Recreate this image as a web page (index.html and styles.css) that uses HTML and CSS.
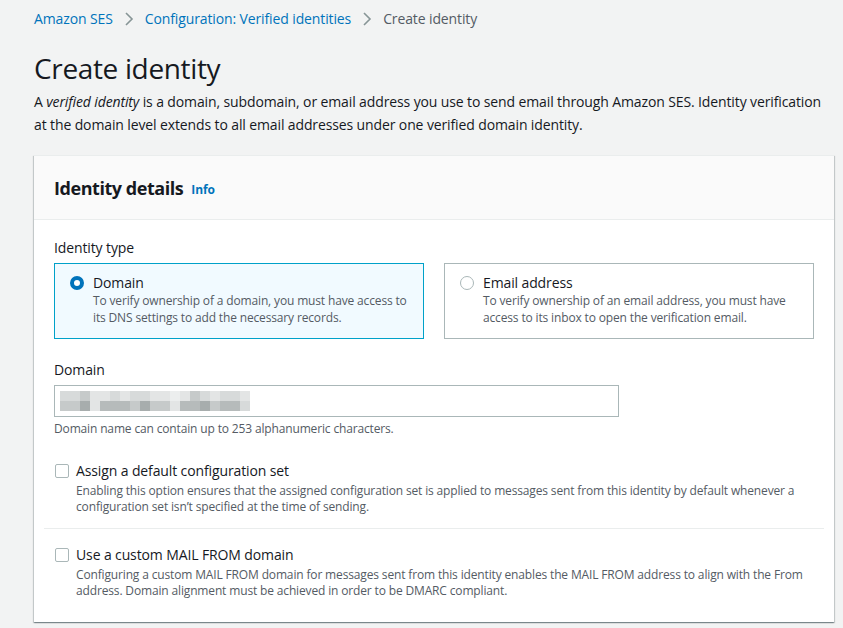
FILE: index.html
```html
<!DOCTYPE html>
<html>
<head>
<meta charset="utf-8">
<link rel="stylesheet" href="styles.css">
</head>
<body>
<div class="page">
  <nav class="crumbs">
    <a class="crumb-link">Amazon SES</a>
    <svg class="chev" width="16" height="16" viewBox="0 0 16 16"><path d="M5 2l6 6-6 6" fill="none" stroke="#879596" stroke-width="1.6"/></svg>
    <a class="crumb-link">Configuration: Verified identities</a>
    <svg class="chev" width="16" height="16" viewBox="0 0 16 16"><path d="M5 2l6 6-6 6" fill="none" stroke="#879596" stroke-width="1.6"/></svg>
    <span class="crumb-current">Create identity</span>
  </nav>
  <h1 class="title">Create identity</h1>
  <p class="lead">A <em>verified identity</em> is a domain, subdomain, or email address you use to send email through Amazon SES. Identity verification at the domain level extends to all email addresses under one verified domain identity.</p>

  <section class="card">
    <header class="card-head">
      <h2 class="card-title">Identity details</h2>
      <a class="info">Info</a>
    </header>
    <div class="card-body">
      <div class="field-label">Identity type</div>
      <div class="tiles">
        <div class="tile tile-selected">
          <span class="radio radio-on"></span>
          <div class="tile-text">
            <div class="tile-label">Domain</div>
            <div class="tile-desc">To verify ownership of a domain, you must have access to its DNS settings to add the necessary records.</div>
          </div>
        </div>
        <div class="tile">
          <span class="radio"></span>
          <div class="tile-text">
            <div class="tile-label">Email address</div>
            <div class="tile-desc">To verify ownership of an email address, you must have access to its inbox to open the verification email.</div>
          </div>
        </div>
      </div>

      <div class="field-label domain-label">Domain</div>
      <div class="input">
        <div class="blur">
          <div class="brow">
            <i class="s2"></i><i class="s2"></i><i class="s3"></i><i class="s1"></i><i class="s1"></i><i class="s2"></i><i class="s1"></i><i class="s2"></i><i class="s2"></i><i class="s1"></i><i class="s1"></i><i class="s0"></i><i class="s1"></i><i class="s3"></i><i class="s2"></i><i class="s1"></i><i class="s2"></i><i class="s2"></i><i class="s1"></i>
          </div>
          <div class="brow">
            <i class="s3"></i><i class="s3"></i><i class="s5"></i><i class="s1"></i><i class="s4"></i><i class="s4"></i><i class="s4"></i><i class="s3"></i><i class="s5"></i><i class="s3"></i><i class="s3"></i><i class="s1"></i><i class="s4"></i><i class="s4"></i><i class="s5"></i><i class="s3"></i><i class="s4"></i><i class="s4"></i><i class="s2"></i>
          </div>
        </div>
      </div>
      <div class="hint">Domain name can contain up to 253 alphanumeric characters.</div>

      <div class="check-row">
        <span class="checkbox"></span>
        <div class="check-text">
          <div class="check-label">Assign a default configuration set</div>
          <div class="check-desc">Enabling this option ensures that the assigned configuration set is applied to messages sent from this identity by default whenever a configuration set isn’t specified at the time of sending.</div>
        </div>
      </div>
      <hr class="divider">
      <div class="check-row">
        <span class="checkbox"></span>
        <div class="check-text">
          <div class="check-label">Use a custom MAIL FROM domain</div>
          <div class="check-desc">Configuring a custom MAIL FROM domain for messages sent from this identity enables the MAIL FROM address to align with the From address. Domain alignment must be achieved in order to be DMARC compliant.</div>
        </div>
      </div>
    </div>
  </section>
</div>
</body>
</html>
```

FILE: styles.css
```css
* { box-sizing: border-box; }
html, body { margin: 0; padding: 0; }
body {
  background: #f2f3f3;
  font-family: "Open Sans", "Noto Sans", sans-serif;
  color: #16191f;
  font-size: 14px;
  letter-spacing: -0.12px;
  width: 843px;
  height: 628px;
  overflow: hidden;
}
.page {
  padding: 8px 0 0 34px;
  width: 843px;
}
.crumbs {
  display: flex;
  align-items: center;
  height: 22px;
  font-size: 14px;
  line-height: 22px;
}
.crumb-link { color: #0073bb; }
.chev { margin: 0 8px 0 8px; }
.crumb-current { color: #545b64; }
.title {
  font-size: 28px;
  font-weight: 400;
  letter-spacing: -0.35px;
  line-height: 36px;
  margin: 20px 0 4px;
  color: #16191f;
}
.lead {
  margin: 0;
  font-size: 14px;
  line-height: 23px;
  color: #16191f;
  width: 800px;
}
.card {
  margin-top: 19px;
  width: 800px;
  background: #fff;
  box-shadow: 0 1px 1px 0 rgba(0,28,36,.3), 1px 1px 1px 0 rgba(0,28,36,.15), -1px 1px 1px 0 rgba(0,28,36,.15);
  border-top: 1px solid #eaeded;
}
.card-head {
  background: #fafafa;
  border-bottom: 1px solid #eaeded;
  height: 64px;
  display: flex;
  align-items: center;
  padding: 0 20px;
}
.card-title {
  margin: 0;
  font-size: 18px;
  font-weight: 700;
  letter-spacing: -0.45px;
  line-height: 24px;
}
.info {
  color: #0073bb;
  font-size: 12px;
  font-weight: 700;
  letter-spacing: -0.1px;
  margin-left: 8px;
  margin-top: 3px;
}
.card-body {
  padding: 17px 20px 23px;
}
.field-label {
  font-size: 14px;
  line-height: 22px;
  margin-bottom: 4px;
}
.tiles {
  display: grid;
  grid-template-columns: 370px 370px;
  column-gap: 20px;
}
.tile {
  border: 1px solid #aab7b8;
  height: 76px;
  display: flex;
  padding: 9px 15px 0 15px;
}
.tile-selected {
  border-color: #00a1c9;
  background: #f1faff;
}
.radio {
  width: 14px;
  height: 14px;
  border-radius: 50%;
  border: 1px solid #aab7b8;
  background: #fff;
  margin-top: 3px;
  flex: none;
}
.radio-on {
  border: 4px solid #0073bb;
}
.tile-text { margin-left: 9px; }
.tile-label { font-size: 14px; line-height: 20px; }
.tile-desc {
  font-size: 12px;
  line-height: 17px;
  letter-spacing: -0.15px;
  color: #545b64;
  margin-top: -1px;
}
.domain-label { margin-top: 20px; }
.input {
  width: 565px;
  height: 32px;
  border: 1px solid #aab7b8;
  background: #fff;
  padding: 5px 0 0 5px;
}
.blur { display: flex; flex-direction: column; }
.brow { display: flex; height: 10px; }
.brow i { width: 10px; height: 10px; display: block; }
.s0 { background: #eceeee; }
.s1 { background: #e3e5e5; }
.s2 { background: #d7dada; }
.s3 { background: #c6caca; }
.s4 { background: #b6bbbb; }
.s5 { background: #a7adad; }
.hint {
  font-size: 12px;
  line-height: 17px;
  letter-spacing: -0.15px;
  color: #545b64;
  margin-top: 3px;
}
.check-row {
  display: flex;
  margin-top: 24px;
  padding-left: 1px;
}
.checkbox {
  width: 14px;
  height: 14px;
  border: 1px solid #aab7b8;
  border-radius: 2px;
  background: #fff;
  margin-top: 3px;
  flex: none;
}
.check-text { margin-left: 7px; }
.check-label { font-size: 14px; line-height: 20px; }
.check-desc {
  font-size: 12px;
  line-height: 16px;
  letter-spacing: -0.15px;
  color: #545b64;
  margin-top: 2px;
}
.divider {
  border: 0;
  border-top: 1px solid #eaeded;
  margin: 13px -10px 0;
}
.divider + .check-row { margin-top: 16px; }
```
